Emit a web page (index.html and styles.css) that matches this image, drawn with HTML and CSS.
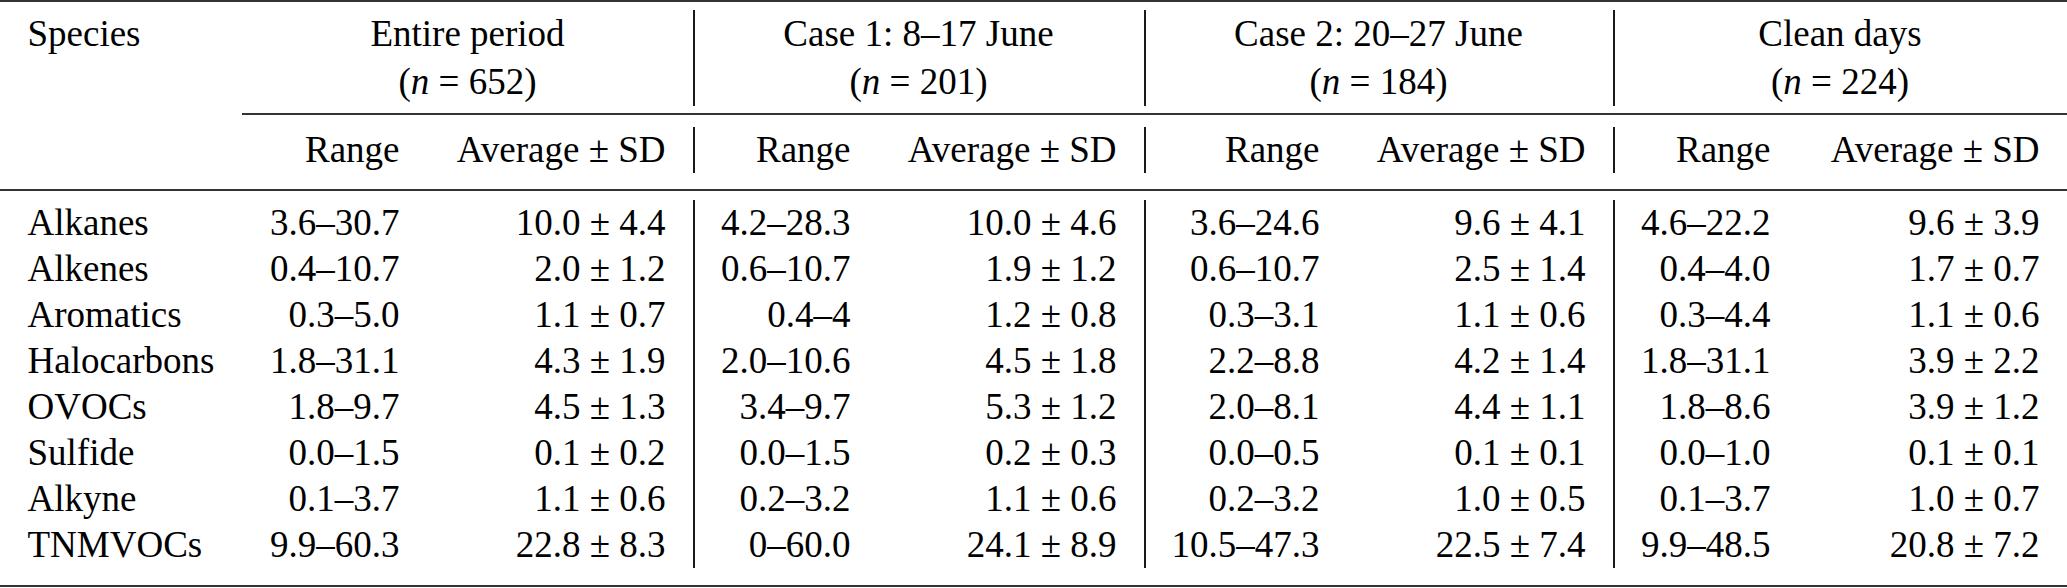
FILE: index.html
```html
<!DOCTYPE html>
<html lang="en">
<head>
<meta charset="utf-8">
<title>Table</title>
<link rel="stylesheet" href="styles.css">
</head>
<body>
<table class="tab">
  <colgroup>
    <col class="c-sp">
    <col class="c-rg"><col class="c-av">
    <col class="c-rg"><col class="c-av">
    <col class="c-rgw"><col class="c-av">
    <col class="c-rg"><col class="c-avl">
  </colgroup>
  <tbody>
    <tr class="rule"><td colspan="9"></td></tr>
    <tr class="sp sp-8"><td colspan="9"></td></tr>
    <tr class="head1">
      <td class="l"><span class="t">Species</span></td>
      <td class="c" colspan="2"><span class="t">Entire period<br>(<i class="t">n</i> = 652)</span></td>
      <td class="c vl" colspan="2"><span class="t">Case 1: 8–17 June<br>(<i class="t">n</i> = 201)</span></td>
      <td class="c vl" colspan="2"><span class="t">Case 2: 20–27 June<br>(<i class="t">n</i> = 184)</span></td>
      <td class="c vl" colspan="2"><span class="t">Clean days<br>(<i class="t">n</i> = 224)</span></td>
    </tr>
    <tr class="sp sp-7"><td colspan="9"></td></tr>
    <tr class="rule"><td class="blank"></td><td colspan="8"></td></tr>
    <tr class="sp sp-12"><td colspan="9"></td></tr>
    <tr class="head2">
      <td></td>
      <td class="r"><span class="t">Range</span></td><td class="r"><span class="t">Average ± SD</span></td>
      <td class="r vl"><span class="t">Range</span></td><td class="r"><span class="t">Average ± SD</span></td>
      <td class="r vl"><span class="t">Range</span></td><td class="r"><span class="t">Average ± SD</span></td>
      <td class="r vl"><span class="t">Range</span></td><td class="r"><span class="t">Average ± SD</span></td>
    </tr>
    <tr class="sp sp-16"><td colspan="9"></td></tr>
    <tr class="rule"><td colspan="9"></td></tr>
    <tr class="sp sp-9"><td colspan="9"></td></tr>
    <tr class="row">
      <td class="l"><span class="t">Alkanes</span></td>
      <td class="r"><span class="t">3.6–30.7</span></td><td class="r"><span class="t">10.0 ± 4.4</span></td>
      <td class="r vl"><span class="t">4.2–28.3</span></td><td class="r"><span class="t">10.0 ± 4.6</span></td>
      <td class="r vl"><span class="t">3.6–24.6</span></td><td class="r"><span class="t">9.6 ± 4.1</span></td>
      <td class="r vl"><span class="t">4.6–22.2</span></td><td class="r"><span class="t">9.6 ± 3.9</span></td>
    </tr>
    <tr class="row">
      <td class="l"><span class="t">Alkenes</span></td>
      <td class="r"><span class="t">0.4–10.7</span></td><td class="r"><span class="t">2.0 ± 1.2</span></td>
      <td class="r vl"><span class="t">0.6–10.7</span></td><td class="r"><span class="t">1.9 ± 1.2</span></td>
      <td class="r vl"><span class="t">0.6–10.7</span></td><td class="r"><span class="t">2.5 ± 1.4</span></td>
      <td class="r vl"><span class="t">0.4–4.0</span></td><td class="r"><span class="t">1.7 ± 0.7</span></td>
    </tr>
    <tr class="row">
      <td class="l"><span class="t">Aromatics</span></td>
      <td class="r"><span class="t">0.3–5.0</span></td><td class="r"><span class="t">1.1 ± 0.7</span></td>
      <td class="r vl"><span class="t">0.4–4</span></td><td class="r"><span class="t">1.2 ± 0.8</span></td>
      <td class="r vl"><span class="t">0.3–3.1</span></td><td class="r"><span class="t">1.1 ± 0.6</span></td>
      <td class="r vl"><span class="t">0.3–4.4</span></td><td class="r"><span class="t">1.1 ± 0.6</span></td>
    </tr>
    <tr class="row">
      <td class="l"><span class="t">Halocarbons</span></td>
      <td class="r"><span class="t">1.8–31.1</span></td><td class="r"><span class="t">4.3 ± 1.9</span></td>
      <td class="r vl"><span class="t">2.0–10.6</span></td><td class="r"><span class="t">4.5 ± 1.8</span></td>
      <td class="r vl"><span class="t">2.2–8.8</span></td><td class="r"><span class="t">4.2 ± 1.4</span></td>
      <td class="r vl"><span class="t">1.8–31.1</span></td><td class="r"><span class="t">3.9 ± 2.2</span></td>
    </tr>
    <tr class="row">
      <td class="l"><span class="t">OVOCs</span></td>
      <td class="r"><span class="t">1.8–9.7</span></td><td class="r"><span class="t">4.5 ± 1.3</span></td>
      <td class="r vl"><span class="t">3.4–9.7</span></td><td class="r"><span class="t">5.3 ± 1.2</span></td>
      <td class="r vl"><span class="t">2.0–8.1</span></td><td class="r"><span class="t">4.4 ± 1.1</span></td>
      <td class="r vl"><span class="t">1.8–8.6</span></td><td class="r"><span class="t">3.9 ± 1.2</span></td>
    </tr>
    <tr class="row">
      <td class="l"><span class="t">Sulfide</span></td>
      <td class="r"><span class="t">0.0–1.5</span></td><td class="r"><span class="t">0.1 ± 0.2</span></td>
      <td class="r vl"><span class="t">0.0–1.5</span></td><td class="r"><span class="t">0.2 ± 0.3</span></td>
      <td class="r vl"><span class="t">0.0–0.5</span></td><td class="r"><span class="t">0.1 ± 0.1</span></td>
      <td class="r vl"><span class="t">0.0–1.0</span></td><td class="r"><span class="t">0.1 ± 0.1</span></td>
    </tr>
    <tr class="row">
      <td class="l"><span class="t">Alkyne</span></td>
      <td class="r"><span class="t">0.1–3.7</span></td><td class="r"><span class="t">1.1 ± 0.6</span></td>
      <td class="r vl"><span class="t">0.2–3.2</span></td><td class="r"><span class="t">1.1 ± 0.6</span></td>
      <td class="r vl"><span class="t">0.2–3.2</span></td><td class="r"><span class="t">1.0 ± 0.5</span></td>
      <td class="r vl"><span class="t">0.1–3.7</span></td><td class="r"><span class="t">1.0 ± 0.7</span></td>
    </tr>
    <tr class="row">
      <td class="l"><span class="t">TNMVOCs</span></td>
      <td class="r"><span class="t">9.9–60.3</span></td><td class="r"><span class="t">22.8 ± 8.3</span></td>
      <td class="r vl"><span class="t">0–60.0</span></td><td class="r"><span class="t">24.1 ± 8.9</span></td>
      <td class="r vl"><span class="t">10.5–47.3</span></td><td class="r"><span class="t">22.5 ± 7.4</span></td>
      <td class="r vl"><span class="t">9.9–48.5</span></td><td class="r"><span class="t">20.8 ± 7.2</span></td>
    </tr>
    <tr class="sp sp-17"><td colspan="9"></td></tr>
    <tr class="rule"><td colspan="9"></td></tr>
  </tbody>
</table>
</body>
</html>
```
FILE: styles.css
```css
html, body {
  margin: 0;
  padding: 0;
  background: #ffffff;
}

body {
  font-family: "Liberation Serif", serif;
  font-size: 37px;
  color: #000000;
}

table, td {
  font-family: "Liberation Serif", serif;
}

.t {
  font-family: "Liberation Serif", serif;
}

i.t {
  font-style: italic;
}

.tab {
  width: 2067px;
  border-collapse: collapse;
  border-spacing: 0;
  table-layout: fixed;
  font-size: 37px;
}

.c-sp { width: 242px; }
.c-rg { width: 185px; }
.c-rgw { width: 203px; }
.c-av { width: 266px; }
.c-avl { width: 269px; }

.tab td {
  padding: 0 27.5px;
  white-space: nowrap;
  line-height: 46px;
  vertical-align: top;
}

.head1 td {
  line-height: 48px;
}

.l { text-align: left; }
.r { text-align: right; }
.c { text-align: center; }

.vl {
  box-shadow: inset 2px 0 0 #1a1a1a;
}

.rule td,
.sp td {
  padding: 0;
  line-height: 0;
  font-size: 0;
}

.rule td {
  height: 2px;
  background: #333333;
}

.rule td.blank {
  background: transparent;
}

.sp-7 td { height: 7px; }
.sp-8 td { height: 8px; }
.sp-9 td { height: 9px; }
.sp-12 td { height: 12px; }
.sp-16 td { height: 16px; }
.sp-17 td { height: 17px; }
```
